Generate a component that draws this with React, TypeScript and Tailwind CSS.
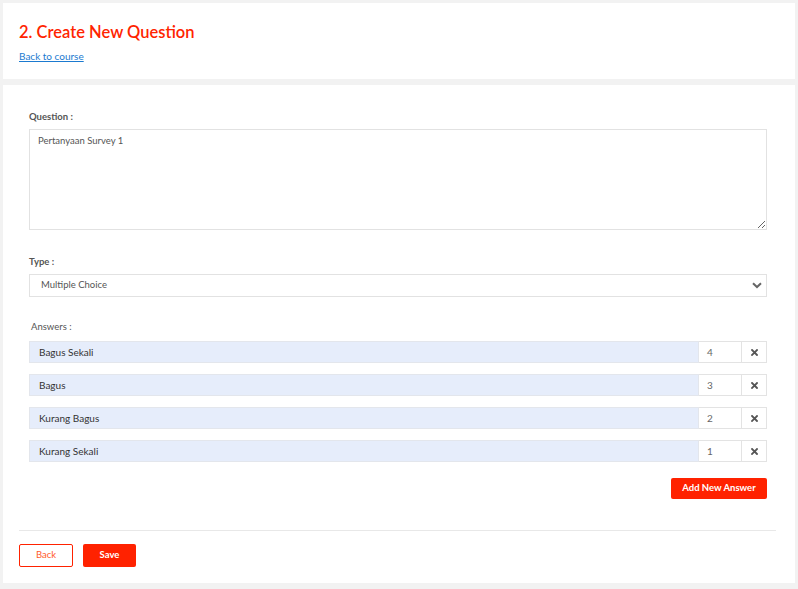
import React from "react";

const answers = [
  { label: "Bagus Sekali", value: "4" },
  { label: "Bagus", value: "3" },
  { label: "Kurang Bagus", value: "2" },
  { label: "Kurang Sekali", value: "1" },
];

function XIcon() {
  return (
    <svg width="7" height="7" viewBox="0 0 7 7">
      <path d="M1 1 L6 6 M6 1 L1 6" stroke="#555" strokeWidth="1.8" strokeLinecap="square" />
    </svg>
  );
}

export default function App() {
  return (
    <div className="min-h-[589px] w-[798px] bg-[#f2f2f2] pt-[3px] px-[3px] pb-[6px] text-[#444]" style={{ fontFamily: "Lato, 'Open Sans', sans-serif" }}>
      <div className="bg-white h-[76px] pl-[16px] pt-[19px]">
        <h1 className="text-[16.5px] leading-[20px] font-semibold text-[#ff2400]">2. Create New Question</h1>
        <a href="#" className="block mt-[8px] text-[10px] leading-[12px] text-[#1b7ad0] underline">Back to course</a>
      </div>
      <div className="bg-white mt-[6px] h-[498px] px-[16px] pt-[26px]">
        <div className="px-[10px] w-[758px]">
          <label className="block text-[9.5px] leading-[12px] font-bold text-[#555]">Question :</label>
          <textarea
            defaultValue="Pertanyaan Survey 1"
            className="block mt-[6px] w-[738px] h-[101px] border border-[#e2e2e2] px-[8px] py-[5px] text-[9.5px] leading-[12px] text-[#555] resize-y outline-none"
          />
          <label className="block mt-[26px] text-[9.5px] leading-[12px] font-bold text-[#555]">Type :</label>
          <div className="relative mt-[6px] w-[738px] h-[23px] border border-[#e2e2e2] flex items-center pl-[11px] text-[9.5px] text-[#555]">
            Multiple Choice
            <svg className="absolute right-[4px] top-[7px]" width="10" height="7" viewBox="0 0 10 7">
              <path d="M1 1.2 L5 5 L9 1.2" stroke="#666" strokeWidth="2" fill="none" />
            </svg>
          </div>
          <label className="block mt-[24px] ml-[2px] text-[9.5px] leading-[12px] font-normal text-[#555]">Answers :</label>
          <div className="mt-[8px] flex flex-col gap-[11px]">
            {answers.map((a) => (
              <div key={a.label} className="flex h-[22px] w-[738px]">
                <div className="flex-1 bg-[#e6edfb] border border-[#e3e6ec] flex items-center pl-[9px] text-[10px] text-[#333]">{a.label}</div>
                <div className="w-[43px] border border-[#e3e3e3] border-l-0 flex items-center pl-[8px] text-[10px] text-[#666]">{a.value}</div>
                <div className="w-[25px] border border-[#e3e3e3] border-l-0 flex items-center justify-center"><XIcon /></div>
              </div>
            ))}
          </div>
          <div className="flex justify-end mt-[16px] w-[738px]">
            <button className="h-[21px] w-[96px] bg-[#ff2200] rounded-[2px] text-white text-[9.5px] font-bold">Add New Answer</button>
          </div>
        </div>
        <div className="mt-[31px] border-t border-[#e8e8e8] w-[757px]" />
        <div className="flex gap-[10px] mt-[13px]">
          <button className="h-[23px] w-[54px] border border-[#ff2200] rounded-[2px] text-[#ff5a2a] text-[9.5px] bg-white">Back</button>
          <button className="h-[23px] w-[53px] bg-[#ff2200] rounded-[2px] text-white text-[9.5px] font-bold">Save</button>
        </div>
      </div>
    </div>
  );
}
